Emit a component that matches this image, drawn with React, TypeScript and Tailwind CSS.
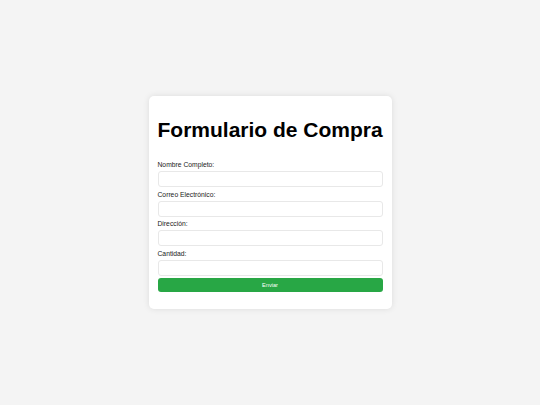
export default function App() {
  const fields = ["Nombre Completo:", "Correo Electrónico:", "Dirección:", "Cantidad:"];

  return (
    <div className="min-h-screen flex items-center justify-center bg-[#f4f4f4] font-['Liberation_Sans',Arial,sans-serif]">
      <form className="w-[243px] bg-white rounded-[5px] shadow-[0_0_6px_rgba(0,0,0,0.1)] px-[9px] pt-[9px] pb-[9px]">
        <h1 className="mt-[13px] mb-[19px] text-center whitespace-nowrap text-[21px] leading-[24px] font-bold text-black">
          Formulario de Compra
        </h1>
        {fields.map((label, i) => (
          <div key={label}>
            <label className="block text-[6.75px] leading-[8px] text-[#222] mb-[2px]">{label}</label>
            <input
              type="text"
              className={
                "block w-full h-[16px] bg-white border border-[#e8e8e8] rounded-[3px] " +
                (i === fields.length - 1 ? "mb-[1.7px]" : "mb-[3.67px]")
              }
            />
          </div>
        ))}
        <button
          type="button"
          className="block w-full h-[14.5px] mb-[8px] bg-[#28a745] rounded-[3px] text-white text-[5.6px] leading-[14.5px] text-center"
        >
          Enviar
        </button>
      </form>
    </div>
  );
}
